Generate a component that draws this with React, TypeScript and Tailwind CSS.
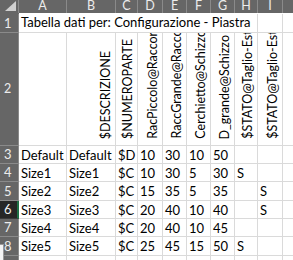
const columns = ["A", "B", "C", "D", "E", "F", "G", "H", "I", "J"];

// rotated field names in row 2 (column A is empty)
const fieldNames = [
  "",
  "$DESCRIZIONE",
  "$NUMEROPARTE",
  "RacPiccolo@RaccordoEsterno",
  "RaccGrande@RaccordoEsterno",
  "Cerchietto@Schizzo",
  "D_grande@Schizzo",
  "$STATO@Taglio-Estruso1",
  "$STATO@Taglio-Estruso2",
  "",
];

const rows = [
  { n: 3, h: "h-[18px]", cells: ["Default", "Default", "$D", "10", "30", "10", "50", "", "", ""] },
  { n: 4, h: "h-[18px]", cells: ["Size1", "Size1", "$C", "10", "30", "5", "30", "S", "", ""] },
  { n: 5, h: "h-[19px]", cells: ["Size2", "Size2", "$C", "15", "35", "5", "35", "", "S", ""] },
  { n: 6, h: "h-[18px]", cells: ["Size3", "Size3", "$C", "20", "40", "10", "40", "", "S", ""] },
  { n: 7, h: "h-[18px]", cells: ["Size4", "Size4", "$C", "20", "40", "10", "45", "", "", ""] },
  { n: 8, h: "h-[19px]", cells: ["Size5", "Size5", "$C", "25", "45", "15", "50", "S", "", ""] },
];

const grid =
  "grid grid-cols-[19px_48px_49px_22px_25px_24px_24px_24px_23px_25px_60px]";

function RowHeader({ n, active }: { n: number; active?: boolean }) {
  return (
    <div
      className={
        active
          ? "flex items-center pl-[4px] bg-[#262626] text-[#f0f0f0] border-r-2 border-r-[#1e7145] border-b border-b-[#3a3a3a]"
          : "flex items-center pl-[4px] bg-[#666666] text-[#ececec] border-r border-r-[#8a8a8a] border-b border-b-[#8a8a8a]"
      }
    >
      {n}
    </div>
  );
}

export default function App() {
  return (
    <div className="relative w-[293px] h-[260px] overflow-hidden bg-white text-[13px] leading-none text-black font-['Lato',_'Liberation_Sans',_sans-serif]">
      {/* column letters */}
      <div className={`${grid} h-[14px] text-[12.5px]`}>
        <div className="relative bg-[#666666] border-r border-r-[#8a8a8a]">
          <div className="absolute right-[2px] bottom-[2px] w-0 h-0 border-l-[11px] border-l-transparent border-b-[10px] border-b-[#d0d0d0]" />
        </div>
        {columns.map((c) => (
          <div
            key={c}
            className="flex items-center justify-center bg-[#666666] text-[#ececec] border-r border-r-[#8a8a8a]"
          >
            {c}
          </div>
        ))}
        <div className="bg-[#666666]" />
      </div>

      {/* row 1: title flowing across the empty cells */}
      <div className={`${grid} h-[19px]`}>
        <RowHeader n={1} />
        <div className="col-span-8 flex items-end pb-[3px] pl-[2px] whitespace-nowrap border-r border-b border-[#dadada]">
          Tabella dati per: Configurazione - Piastra
        </div>
        <div className="border-r border-b border-[#dadada]" />
        <div className="border-r border-b border-[#dadada]" />
      </div>

      {/* row 2: vertical field names */}
      <div className={`${grid} h-[113px] text-[12.5px]`}>
        <RowHeader n={2} />
        {fieldNames.map((name, i) => (
          <div
            key={i}
            className="flex flex-col justify-end items-end pr-[3px] pb-[6px] overflow-hidden border-r border-b border-[#dadada]"
          >
            {name && (
              <span className="shrink-0 whitespace-nowrap [writing-mode:vertical-rl] rotate-180">
                {name}
              </span>
            )}
          </div>
        ))}
      </div>

      {/* data rows */}
      {rows.map((r) => (
        <div key={r.n} className={`${grid} ${r.h}`}>
          <RowHeader n={r.n} active={r.n === 6} />
          {r.cells.map((v, i) => (
            <div
              key={i}
              className="flex items-center pl-[2px] pt-[1px] whitespace-nowrap overflow-hidden border-r border-b border-[#dadada]"
            >
              {v}
            </div>
          ))}
        </div>
      ))}

      {/* row 9, cut off at the bottom */}
      <div className={`${grid} h-[20px]`}>
        <RowHeader n={9} />
        {columns.map((c) => (
          <div key={c} className="border-r border-[#dadada]" />
        ))}
      </div>

      {/* small box over the lower left corner */}
      <div className="absolute left-0 top-[244px] w-[4px] h-[16px] bg-[#f4f4f4] border-r border-t border-[#9a9a9a]" />
    </div>
  );
}
